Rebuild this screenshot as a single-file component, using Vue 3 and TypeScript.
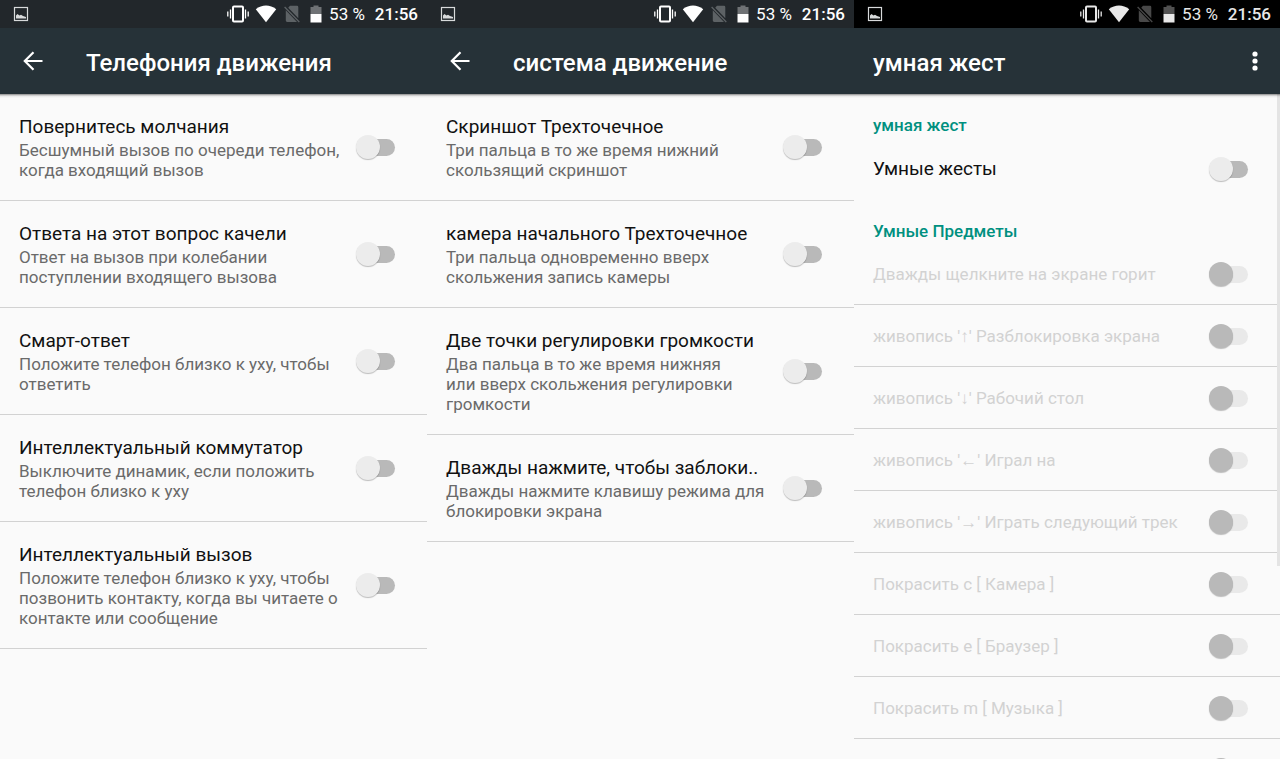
<script setup lang="ts">
import { reactive } from 'vue'

interface Setting {
  title: string
  summary?: string
  disabled?: boolean
  on: boolean
}
interface Section {
  heading?: string
  items: Setting[]
}
interface Screen {
  title: string
  back: boolean
  dark: boolean
  sections: Section[]
}

const item = (title: string, summary?: string): Setting => ({ title, summary, on: false })
const locked = (title: string): Setting => ({ title, disabled: true, on: false })

const screens = reactive<Screen[]>([
  {
    title: 'Телефония движения',
    back: true,
    dark: false,
    sections: [
      {
        items: [
          item('Повернитесь молчания', 'Бесшумный вызов по очереди телефон,\nкогда входящий вызов'),
          item('Ответа на этот вопрос качели', 'Ответ на вызов при колебании\nпоступлении входящего вызова'),
          item('Смарт-ответ', 'Положите телефон близко к уху, чтобы\nответить'),
          item('Интеллектуальный коммутатор', 'Выключите динамик, если положить\nтелефон близко к уху'),
          item('Интеллектуальный вызов', 'Положите телефон близко к уху, чтобы\nпозвонить контакту, когда вы читаете о\nконтакте или сообщение'),
        ],
      },
    ],
  },
  {
    title: 'система движение',
    back: true,
    dark: false,
    sections: [
      {
        items: [
          item('Скриншот Трехточечное', 'Три пальца в то же время нижний\nскользящий скриншот'),
          item('камера начального Трехточечное', 'Три пальца одновременно вверх\nскольжения запись камеры'),
          item('Две точки регулировки громкости', 'Два пальца в то же время нижняя\nили вверх скольжения регулировки\nгромкости'),
          item('Дважды нажмите, чтобы заблоки..', 'Дважды нажмите клавишу режима для\nблокировки экрана'),
        ],
      },
    ],
  },
  {
    title: 'умная жест',
    back: false,
    dark: true,
    sections: [
      { heading: 'умная жест', items: [item('Умные жесты')] },
      {
        heading: 'Умные Предметы',
        items: [
          locked('Дважды щелкните на экране горит'),
          locked("живопись '↑' Разблокировка экрана"),
          locked("живопись '↓' Рабочий стол"),
          locked("живопись '←' Играл на"),
          locked("живопись '→' Играть следующий трек"),
          locked('Покрасить c [ Камера ]'),
          locked('Покрасить e [ Браузер ]'),
          locked('Покрасить m [ Музыка ]'),
          locked(''),
        ],
      },
    ],
  },
])
</script>

<template>
  <main class="screens">
    <section v-for="screen in screens" :key="screen.title" class="screen">
      <div class="status" :class="{ dark: screen.dark }">
        <svg class="shot" width="16" height="16" viewBox="0 0 16 16" aria-hidden="true">
          <rect x="1.500" y="1.500" width="13" height="13" fill="none" stroke="currentColor" stroke-width="1.200" />
          <path d="M3 12.500V9.600l1.500-1.600 2 1.500 1.500-.8 2 1.300 3 1V12.500z" fill="currentColor" />
        </svg>
        <svg class="vibrate" width="22" height="18" viewBox="0 0 22 18" aria-hidden="true">
          <rect x="6" y="1.500" width="10" height="15" rx="1" fill="none" stroke="currentColor" stroke-width="2" />
          <path d="M3.500 4.500v9M18.500 4.500v9M.8 6.500v5M21.200 6.500v5" fill="none" stroke="currentColor" stroke-width="1.300" />
        </svg>
        <svg class="wifi" width="22" height="18" viewBox="0 0 22 18" aria-hidden="true">
          <path d="M11 17.200L.8 4.200C7-.6 15-.6 21.200 4.200z" fill="currentColor" />
        </svg>
        <svg class="sim" width="16" height="18" viewBox="0 0 16 18" aria-hidden="true">
          <path d="M6 .8H13Q14.300 .8 14.300 2.200V13.200L4.200 2.800zM1.800 5.200L13 17H3.200Q1.800 17 1.800 15.600z" fill="currentColor" />
          <path d="M.6 2L15.300 17" stroke="currentColor" stroke-width="1.300" />
        </svg>
        <svg class="battery" width="12" height="18" viewBox="0 0 12 18" aria-hidden="true">
          <path d="M.5 2H3.500V.5h5V2h3v7H.5z" fill="currentColor" opacity=".35" />
          <path d="M.5 9h11v8.500H.5z" fill="currentColor" />
        </svg>
        <span class="percent">53 %</span>
        <time class="clock">21:56</time>
      </div>

      <header class="bar">
        <button v-if="screen.back" class="back" type="button" aria-label="Назад">
          <svg width="20" height="20" viewBox="0 0 20 20" aria-hidden="true">
            <path d="M19.500 10H2M10.500 1.300L1.800 10l8.700 8.700" fill="none" stroke="currentColor" stroke-width="2.200" />
          </svg>
        </button>
        <h1>{{ screen.title }}</h1>
        <button v-if="!screen.back" class="more" type="button" aria-label="Ещё">
          <svg width="6" height="20" viewBox="0 0 6 20" aria-hidden="true">
            <circle cx="3" cy="3" r="2.600" fill="currentColor" />
            <circle cx="3" cy="10" r="2.600" fill="currentColor" />
            <circle cx="3" cy="17" r="2.600" fill="currentColor" />
          </svg>
        </button>
      </header>

      <div class="content">
        <div class="scroller">
          <template v-for="(group, g) in screen.sections" :key="g">
            <h2 v-if="group.heading">{{ group.heading }}</h2>
            <ul :class="{ last: g === screen.sections.length - 1 }">
              <li v-for="entry in group.items" :key="entry.title">
                <label class="row" :class="{ disabled: entry.disabled, single: !entry.summary }">
                  <span class="text">
                    <span class="title">{{ entry.title }}</span>
                    <span v-if="entry.summary" class="summary">{{ entry.summary }}</span>
                  </span>
                  <input
                    v-model="entry.on"
                    class="switch"
                    type="checkbox"
                    role="switch"
                    :disabled="entry.disabled"
                    :aria-label="entry.title ? undefined : 'Жест'"
                  />
                </label>
              </li>
            </ul>
          </template>
        </div>
        <div v-if="!screen.back" class="thumb"></div>
      </div>
    </section>
  </main>
</template>

<style>
body {
  margin: 0;
  background: #fafafa;
}
</style>

<style scoped>
.screens {
  display: grid;
  grid-template-columns: minmax(0, 427fr) minmax(0, 427fr) minmax(0, 426fr);
  height: 100vh;
  font-family: Roboto, "Noto Sans", sans-serif;
  color: #111;
  background: #fafafa;
}
.screen {
  display: flex;
  flex-direction: column;
  min-height: 0;
}
.status {
  display: flex;
  align-items: center;
  flex: none;
  height: 28px;
  padding: 0 9px 0 13px;
  box-sizing: border-box;
  background: #22272b;
  color: #fff;
  font-size: 17px;
  line-height: 28px;
  white-space: nowrap;
}
.status.dark {
  background: #000;
  color: #e8e8e8;
}
.status svg {
  flex: none;
}
.shot {
  margin-right: auto;
  color: #d8dadb;
}
.wifi {
  margin-left: 6px;
}
.sim {
  margin-left: 7px;
  color: #5d6265;
}
.dark .sim {
  color: #484848;
}
.battery {
  margin-left: 10px;
}
.percent {
  margin-left: 7px;
}
.clock {
  margin-left: 10px;
  font-weight: 500;
}
.bar {
  display: flex;
  align-items: center;
  flex: none;
  position: relative;
  height: 66px;
  padding: 0 22px 0 19px;
  box-sizing: border-box;
  background: #263238;
  color: #fff;
}
.bar::after {
  content: "";
  position: absolute;
  z-index: 1;
  top: 100%;
  left: 0;
  right: 0;
  height: 4px;
  background: linear-gradient(rgba(0, 0, 0, 0.45), rgba(0, 0, 0, 0.08) 50%, transparent);
}
.bar button {
  display: flex;
  align-items: center;
  padding: 0;
  border: 0;
  background: none;
  color: inherit;
}
.back {
  width: 67px;
  height: 40px;
  justify-content: flex-start;
}
.bar .back {
  padding-left: 4px;
  box-sizing: border-box;
}
.more {
  height: 40px;
  margin-left: auto;
}
h1 {
  margin: 0;
  padding-top: 4px;
  font-size: 24px;
  font-weight: 500;
  line-height: 32px;
  white-space: nowrap;
}
.content {
  position: relative;
  flex: 1;
  min-height: 0;
}
.scroller {
  height: 100%;
  overflow-y: auto;
  scrollbar-width: none;
}
.thumb {
  position: absolute;
  top: 0;
  right: 0;
  width: 3px;
  height: 71%;
  background: #e4e4e4;
}
h2 {
  box-sizing: border-box;
  height: 43px;
  margin: 0;
  padding: 19px 19px 0;
  color: #009080;
  font-size: 17px;
  font-weight: 500;
  line-height: 24px;
}
ul {
  margin: 0;
  padding: 0;
  list-style: none;
}
.row {
  display: flex;
  align-items: center;
  justify-content: space-between;
  padding: 20px 32px 20px 19px;
}
.last .row {
  border-bottom: 1px solid #d2d2d2;
}
.single {
  padding-top: 19px;
  padding-bottom: 18px;
}
.last .single {
  padding-top: 18px;
  padding-bottom: 17px;
}
.text {
  display: flex;
  flex-direction: column;
  min-width: 0;
  min-height: 26px;
}
.title {
  font-size: 19px;
  line-height: 26px;
  white-space: nowrap;
}
.disabled .title {
  color: #d2d2d2;
  font-size: 17px;
}
.summary {
  color: #6a6a6a;
  font-size: 17px;
  line-height: 20px;
  white-space: pre;
}
.switch {
  appearance: none;
  position: relative;
  flex: none;
  width: 39px;
  height: 24px;
  margin: 0;
}
.switch::before {
  content: "";
  position: absolute;
  inset: 4px 0 3px 5px;
  border-radius: 9px;
  background: #b9b9b9;
}
.switch::after {
  content: "";
  position: absolute;
  top: 0;
  left: 0;
  width: 24px;
  height: 24px;
  border-radius: 50%;
  background: #ececec;
  box-shadow: 0 1px 1px rgba(0, 0, 0, 0.25);
}
.switch:checked::after {
  left: 15px;
  background: #009688;
}
.switch:disabled::before {
  background: #e9e9e9;
}
.switch:disabled::after {
  background: #b9b9b9;
}
</style>
